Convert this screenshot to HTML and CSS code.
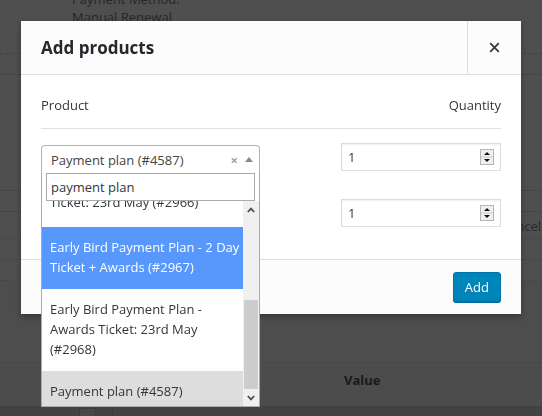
FILE: index.html
```html
<!DOCTYPE html>
<html lang="en">
<head>
<meta charset="utf-8">
<title>Add products</title>
<link rel="stylesheet" href="styles.css">
</head>
<body>
<div class="page">
  <div class="meta">
    <div>Payment Method:</div>
    <div>Manual Renewal</div>
  </div>
  <div class="band b1"></div>
  <div class="band b2"></div>
  <div class="band b3"></div>
  <div class="band b4 dashed"><span class="cancel">Cancel</span></div>
  <div class="band b5 dashed"></div>
  <div class="band b6 dashed"></div>
  <div class="band b7"></div>
  <div class="band thead"><span class="value">Value</span></div>
  <div class="trow"><span class="cb"></span><span class="cell"></span></div>
</div>

<div class="backdrop"></div>

<div class="modal">
  <header class="modal-head">
    <h1 class="modal-title">Add products</h1>
    <button class="close" type="button" aria-label="Close">
      <svg width="11" height="11" viewBox="0 0 11 11"><path d="M1.2 1.2 L9.8 9.8 M9.8 1.2 L1.2 9.8" stroke="#3c3c3c" stroke-width="1.9" fill="none"/></svg>
    </button>
  </header>
  <div class="modal-body">
    <div class="head-row">
      <span>Product</span>
      <span>Quantity</span>
    </div>
    <div class="row">
      <div class="select">
        <div class="selection">
          <span class="sel-text">Payment plan (#4587)</span>
          <span class="sel-ctrl"><span class="clear">×</span><span class="arrow"></span></span>
        </div>
        <div class="dropdown">
          <div class="search"><div class="search-field">payment plan</div></div>
          <div class="results">
            <ul class="options">
              <li class="opt partial">Early Bird Payment Plan - 2 Day<br>Ticket: 23rd May (#2966)</li>
              <li class="opt hl">Early Bird Payment Plan - 2 Day<br>Ticket + Awards (#2967)</li>
              <li class="opt">Early Bird Payment Plan -<br>Awards Ticket: 23rd May<br>(#2968)</li>
              <li class="opt sel">Payment plan (#4587)</li>
            </ul>
            <div class="scrollbar">
              <span class="sb-btn"><svg width="8" height="6" viewBox="0 0 8 6"><path d="M0.8 5 L4 1.6 L7.2 5" stroke="#4a4a4a" stroke-width="1.7" fill="none"/></svg></span>
              <span class="sb-space"></span>
              <span class="sb-thumb"></span>
              <span class="sb-btn"><svg width="8" height="6" viewBox="0 0 8 6"><path d="M0.8 1 L4 4.4 L7.2 1" stroke="#4a4a4a" stroke-width="1.7" fill="none"/></svg></span>
            </div>
          </div>
        </div>
      </div>
      <div class="qty">
        <span>1</span>
        <span class="spin"><svg width="14" height="16" viewBox="0 0 14 16"><rect x="0.5" y="0.5" width="13" height="15" fill="#f0f0f0" stroke="#b5b5b5"/><line x1="1" y1="8" x2="13" y2="8" stroke="#c9c9c9"/><path d="M4 6 L7 3 L10 6 Z" fill="#111"/><path d="M4 10 L7 13 L10 10 Z" fill="#111"/></svg></span>
      </div>
    </div>
    <div class="row">
      <div class="prod-empty"></div>
      <div class="qty">
        <span>1</span>
        <span class="spin"><svg width="14" height="16" viewBox="0 0 14 16"><rect x="0.5" y="0.5" width="13" height="15" fill="#f0f0f0" stroke="#b5b5b5"/><line x1="1" y1="8" x2="13" y2="8" stroke="#c9c9c9"/><path d="M4 6 L7 3 L10 6 Z" fill="#111"/><path d="M4 10 L7 13 L10 10 Z" fill="#111"/></svg></span>
      </div>
    </div>
  </div>
  <footer class="modal-foot">
    <button class="add" type="button">Add</button>
  </footer>
</div>
</body>
</html>
```

FILE: styles.css
```css
html, body {
  margin: 0;
  height: 416px;
  overflow: hidden;
}
body {
  font-family: "Open Sans", "Noto Sans", sans-serif;
  font-size: 13px;
  color: #32373c;
}

/* background page */
.page {
  background: #fff;
  height: 416px;
  overflow: hidden;
}
.meta {
  margin-top: -10px;
  padding: 0 0 27px 72px;
  line-height: 18px;
  color: #7c7c7c;
  border-bottom: 1px dashed #d4d4d4;
}
.band {
  border-bottom: 1px solid #e2e2e2;
}
.band.dashed {
  border-bottom-style: dashed;
}
.b1 { height: 20px; }
.b2 { height: 115px; }
.b3 { height: 20px; }
.b4 {
  height: 26px;
  line-height: 28px;
  text-align: right;
  padding-right: 1px;
  color: #8a8a8a;
}
.b5 { height: 20px; }
.b6 { height: 20px; }
.b7 { height: 81px; background: #f9f9f9; }
.thead {
  height: 43px;
  background: #f6f6f6;
  border-bottom-color: #d0d0d0;
}
.value {
  display: block;
  padding-left: 344px;
  line-height: 34px;
  font-weight: 700;
  color: #555;
}
.trow {
  display: flex;
  height: 20px;
  background: #d8d8d8;
}
.cb {
  width: 15px;
  height: 15px;
  margin: 1px 0 0 79px;
  border: 1px dotted #9a9a9a;
  background: #e8e8e8;
}
.cell {
  margin-left: 16px;
  border-left: 1px solid #c4c4c4;
  flex: 1;
}

/* overlay */
.backdrop {
  position: fixed;
  inset: 0;
  background: rgba(0, 0, 0, 0.69);
}

/* modal */
.modal {
  position: absolute;
  left: 21px;
  top: 21px;
  width: 500px;
  background: #fff;
  box-shadow: 0 3px 6px rgba(0, 0, 0, 0.3);
}
.modal-head {
  display: flex;
  height: 53px;
  background: #fcfcfc;
  border-bottom: 1px solid #dddddd;
}
.modal-title {
  flex: 1;
  margin: 0;
  padding: 0 20px;
  font-size: 17px;
  font-weight: 700;
  line-height: 53px;
  color: #23282d;
}
.close {
  width: 54px;
  height: 53px;
  padding: 0;
  border: 0;
  border-left: 1px solid #dddddd;
  background: transparent;
  display: flex;
  align-items: center;
  justify-content: center;
}

.modal-body {
  padding: 0 20px 18px;
}
.head-row {
  display: flex;
  justify-content: space-between;
  padding: 20px 0 13px;
  line-height: 20px;
  border-bottom: 1px solid #e1e1e1;
}
.row {
  display: flex;
  justify-content: space-between;
  align-items: flex-start;
  padding: 14px 0;
}

/* select2 */
.select {
  position: relative;
  width: 219px;
  margin-top: 2px;
  margin-bottom: -2px;
}
.selection {
  box-sizing: border-box;
  height: 28px;
  padding: 2px 6px 0 9px;
  border: 1px solid #b4b4b4;
  border-bottom: 0;
  border-radius: 4px 4px 0 0;
  display: flex;
  justify-content: space-between;
  line-height: 25px;
  color: #444;
  background: #fff;
}
.sel-ctrl {
  display: flex;
  align-items: center;
}
.clear {
  color: #a0a0a0;
  font-size: 13px;
  font-weight: 700;
  margin-right: 7px;
}
.arrow {
  width: 0;
  height: 0;
  border-left: 4px solid transparent;
  border-right: 4px solid transparent;
  border-bottom: 5px solid #888;
  margin-top: -2px;
}
.dropdown {
  position: absolute;
  top: 100%;
  left: 0;
  right: 0;
  background: #fff;
  border: 1px solid #aaa;
  border-top: 0;
  z-index: 2;
}
.search {
  padding: 0 4px;
}
.search-field {
  box-sizing: border-box;
  height: 28px;
  border: 1px solid #aaa;
  padding: 0 4px;
  line-height: 26px;
  color: #32373c;
}
.results {
  display: flex;
  height: 205px;
  overflow: hidden;
}
.options {
  flex: 1;
  margin: 0;
  padding: 0;
  list-style: none;
  overflow: hidden;
}
.opt {
  padding: 10px 8px 12px;
  line-height: 20px;
  white-space: nowrap;
  color: #32373c;
}
.opt.partial {
  margin-top: -36px;
  padding: 7px 8px 15px;
}
.opt.hl {
  background: #5897fb;
  color: #fff;
}
.opt.sel {
  background: #dddddd;
}
.scrollbar {
  width: 16px;
  display: flex;
  flex-direction: column;
  background: #f0f0f0;
}
.sb-btn {
  height: 17px;
  display: flex;
  align-items: center;
  justify-content: center;
}
.sb-space {
  height: 82px;
}
.sb-thumb {
  height: 89px;
  margin: 0 1px;
  background: #cdcdcd;
}

/* quantity */
.qty {
  box-sizing: border-box;
  width: 160px;
  height: 28px;
  border: 1px solid #dddddd;
  box-shadow: inset 0 1px 2px rgba(0, 0, 0, 0.07);
  padding: 0 6px 0 6px;
  display: flex;
  align-items: center;
  justify-content: space-between;
  color: #32373c;
}
.spin {
  display: flex;
}

/* footer */
.modal-foot {
  display: flex;
  justify-content: flex-end;
  padding: 12px 20px 12px;
  background: #fcfcfc;
  border-top: 1px solid #dddddd;
}
.add {
  height: 30px;
  padding: 0 11px;
  border: 1px solid #0073aa;
  border-radius: 3px;
  background: #0085ba;
  box-shadow: 0 1px 0 #006799;
  color: #fff;
  font-family: "Open Sans", "Noto Sans", sans-serif;
  font-size: 13px;
  line-height: 28px;
}
```
